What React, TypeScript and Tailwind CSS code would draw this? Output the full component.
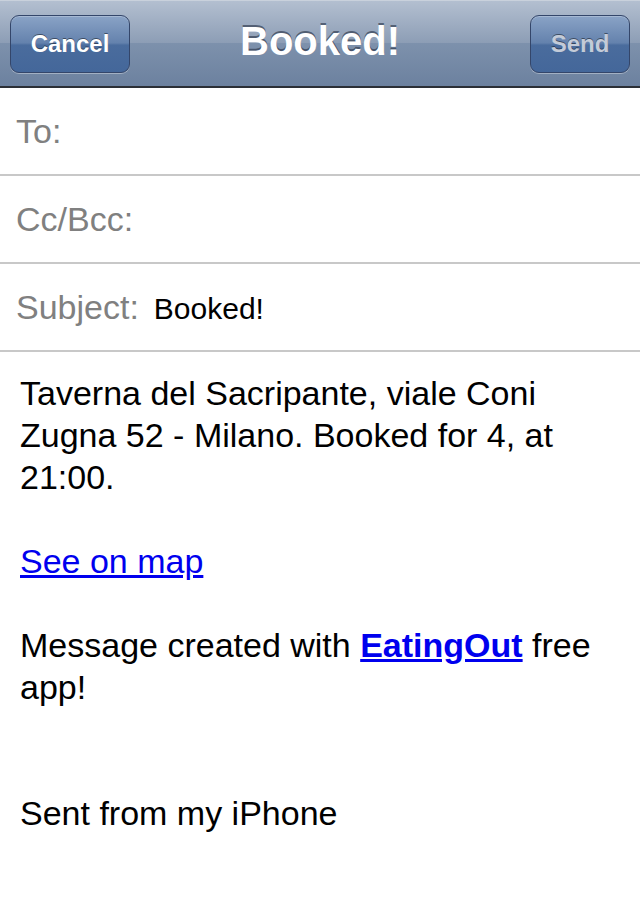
import React from "react";

const font = "font-['Liberation_Sans',Arial,sans-serif]";

function NavButton({ label, disabled, width }: { label: string; disabled?: boolean; width: string }) {
  return (
    <button
      className={`${width} h-[58px] rounded-[9px] border border-[#34466a] bg-[linear-gradient(to_bottom,#8aa3c6_0%,#6482ad_48%,#4a6c9d_52%,#44679a_100%)] shadow-[0_1px_0_rgba(255,255,255,0.35),inset_0_1px_0_rgba(255,255,255,0.25)] flex items-center justify-center`}
    >
      <span
        className={`text-[24px] leading-none font-bold ${
          disabled ? "text-[#c3cbd8]" : "text-white"
        } [text-shadow:0_-1px_0_rgba(0,0,0,0.45)]`}
      >
        {label}
      </span>
    </button>
  );
}

function HeaderRow({ label, value }: { label: string; value?: string }) {
  return (
    <div className="h-[88px] border-b-2 border-[#c8c8c8] pl-4 flex items-baseline">
      <span className="text-[34px] leading-[86px] text-[#808080]">{label}</span>
      {value && <span className="ml-[15px] text-[30px] text-black">{value}</span>}
    </div>
  );
}

export default function App() {
  return (
    <div className={`${font} w-[640px] min-h-[920px] bg-white`}>
      <div className="h-[88px] border-b-2 border-[#2b2f36] border-t border-t-[#c9d1dc] bg-[linear-gradient(to_bottom,#b3bfd0_0%,#8c9db5_50%,#7d91ac_50%,#6c819f_100%)] grid grid-cols-[1fr_auto_1fr] items-center px-[10px]">
        <div className="flex justify-start">
          <NavButton label="Cancel" width="w-[120px]" />
        </div>
        <h1 className="text-[40px] leading-none font-bold text-white [text-shadow:0_-2px_0_rgba(35,45,65,0.6)] pb-[6px]">
          Booked!
        </h1>
        <div className="flex justify-end">
          <NavButton label="Send" disabled width="w-[100px]" />
        </div>
      </div>

      <HeaderRow label="To:" />
      <HeaderRow label="Cc/Bcc:" />
      <HeaderRow label="Subject:" value="Booked!" />

      <div className="px-5 pt-5 text-[34px] leading-[42px] text-black">
        <p>Taverna del Sacripante, viale Coni Zugna 52 - Milano. Booked for 4, at 21:00.</p>
        <p className="mt-[42px]">
          <a href="#" className="text-[#0000ee] underline">
            See on map
          </a>
        </p>
        <p className="mt-[42px]">
          Message created with{" "}
          <a href="#" className="text-[#0000ee] underline font-bold">
            EatingOut
          </a>{" "}
          free app!
        </p>
        <p className="mt-[84px]">Sent from my iPhone</p>
      </div>
    </div>
  );
}
